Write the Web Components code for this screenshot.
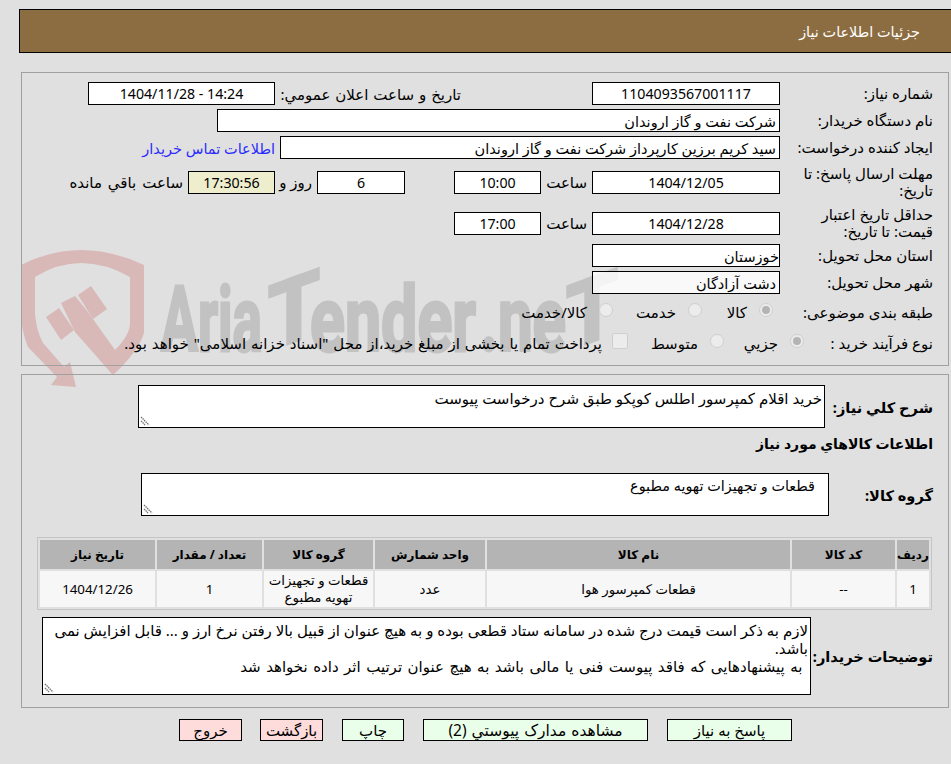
<!DOCTYPE html>
<html lang="fa" dir="rtl">
<head>
<meta charset="utf-8">
<title>جزئیات اطلاعات نیاز</title>
<style>
  html, body { margin:0; padding:0; background:#e0e0e0; }
  body { position:relative; width:951px; height:764px; overflow:hidden; color:#000;
    font:15px "Noto Sans","DejaVu Sans",sans-serif; }
  .t { display:block; flex:none; white-space:nowrap; }
  a { color:#2b2bff; text-decoration:none; font-size:14.5px; }
</style>
</head>
<body>
<water-mark></water-mark>
<app-bar>جزئیات اطلاعات نیاز</app-bar>

<panel-box style="margin-top:19px;height:283px;padding-top:9px">
  <form-row label="شماره نیاز:">
    <val-box center style="width:188px">1104093567001117</val-box>
    <span class="t" style="width:186px;margin-right:131px;word-spacing:1px">تاریخ و ساعت اعلان عمومي:</span>
    <val-box center dir="ltr" style="width:187px">1404/11/28 - 14:24</val-box>
  </form-row>
  <form-row label="نام دستگاه خریدار:" style="margin-top:4px">
    <val-box style="width:563px">شرکت نفت و گاز اروندان</val-box>
  </form-row>
  <form-row label="ایجاد کننده درخواست:" style="margin-top:4px">
    <val-box style="width:500px">سید کریم برزین کارپرداز شرکت نفت و گاز اروندان</val-box>
    <a class="t" href="#" style="margin-right:5px">اطلاعات تماس خریدار</a>
  </form-row>
  <form-row label="مهلت ارسال پاسخ: تا تاریخ:" style="margin-top:6px;height:32px">
    <val-box center style="width:188px">1404/12/05</val-box>
    <span class="t" style="width:46px;margin-right:5px">ساعت</span>
    <val-box center style="width:87px">10:00</val-box>
    <val-box center style="width:88px;margin-right:49px">6</val-box>
    <span class="t" style="width:37px;margin-right:5px">روز و</span>
    <val-box center style="width:87px;background:#eeeecc">17:30:56</val-box>
    <span class="t" style="margin-right:5px;word-spacing:2px">ساعت باقي مانده</span>
  </form-row>
  <form-row label="حداقل تاریخ اعتبار قیمت: تا تاریخ:" style="margin-top:9px;height:32px">
    <val-box center style="width:188px">1404/12/28</val-box>
    <span class="t" style="width:46px;margin-right:5px">ساعت</span>
    <val-box center style="width:87px">17:00</val-box>
  </form-row>
  <form-row label="استان محل تحویل:" style="margin-top:6px">
    <val-box style="width:188px;padding-right:0">خوزستان</val-box>
  </form-row>
  <form-row label="شهر محل تحویل:" style="margin-top:4px">
    <val-box style="width:188px;background:rgba(255,255,255,.8)">دشت آزادگان</val-box>
  </form-row>
  <form-row label="طبقه بندی موضوعی:" style="margin-top:7px;height:22px">
    <radio-opt checked style="width:71px;margin-right:7px">کالا</radio-opt>
    <radio-opt style="width:89px">خدمت</radio-opt>
    <radio-opt>کالا/خدمت</radio-opt>
  </form-row>
  <form-row label="نوع فرآیند خرید :" style="margin-top:9px;height:22px">
    <radio-opt checked style="width:80px;margin-right:-24px">جزيي</radio-opt>
    <radio-opt style="width:96px">متوسط</radio-opt>
    <radio-opt square style="word-spacing:1px">پرداخت تمام یا بخشی از مبلغ خرید،از محل "اسناد خزانه اسلامی" خواهد بود.</radio-opt>
  </form-row>
</panel-box>

<panel-box style="margin-top:8px;height:322px;padding-top:10px">
  <wide-row label="شرح کلي نياز:" style="height:43px;font-size:14.6px">
    <note-area style="width:687px;height:43px;margin-right:108px;padding-right:2px;font-size:15px">خرید اقلام کمپرسور اطلس کوپکو طبق شرح درخواست پیوست</note-area>
  </wide-row>
  <wide-row label="اطلاعات كالاهاي مورد نياز" style="height:20px;margin-top:5px;font-size:14px"></wide-row>
  <wide-row label="گروه کالا:" style="height:43px;margin-top:20px;font-size:14.6px">
    <note-area style="width:688px;height:43px;margin-right:104px;padding-right:13px;font-size:14.4px">قطعات و تجهیزات تهویه مطبوع</note-area>
  </wide-row>
  <items-table style="margin:21px 16px 0 15px"></items-table>
  <wide-row label="توضیحات خریدار:" style="height:78px;margin-top:7px;font-size:14.6px">
    <note-area style="width:769px;height:78px;margin-right:122px;padding-right:2px;font-size:15px">لازم به ذکر است قیمت درج شده در سامانه ستاد قطعی بوده و به هیچ عنوان از قبیل بالا رفتن نرخ ارز و ... قابل افزایش نمی باشد.<br><span style="word-spacing:1.6px">&nbsp;به پیشنهادهایی که فاقد پیوست فنی یا مالی باشد به هیچ عنوان ترتیب اثر داده نخواهد شد</span></note-area>
  </wide-row>
</panel-box>

<action-bar style="margin-top:11px">
  <action-btn style="width:125px;margin-right:159px">پاسخ به نیاز</action-btn>
  <action-btn style="width:225px;margin-right:19px;font-size:15.5px;word-spacing:1px">مشاهده مدارک پیوستي (2)</action-btn>
  <action-btn style="width:62px;margin-right:19px">چاپ</action-btn>
  <action-btn tone="red" style="width:63px;margin-right:19px">بازگشت</action-btn>
  <action-btn tone="red" style="width:63px;margin-right:18px">خروج</action-btn>
</action-bar>

<script>
class AppBar extends HTMLElement {
  constructor() {
    super();
    this.attachShadow({ mode: 'open' }).innerHTML = `
      <style>
        :host { display:flex; align-items:center; box-sizing:border-box; height:44px; width:932px;
          margin-top:9px; border:1px solid #000; border-right:0; background:#8c6d42; color:#fff;
          font-size:14.4px; padding-right:31px; position:relative; }
      </style><slot></slot>`;
  }
}
customElements.define('app-bar', AppBar);

class PanelBox extends HTMLElement {
  constructor() {
    super();
    this.attachShadow({ mode: 'open' }).innerHTML = `
      <style>
        :host { display:block; position:relative; width:926px; margin-right:2px; border:1px solid #a0a0a0; }
      </style><slot></slot>`;
  }
}
customElements.define('panel-box', PanelBox);

class FormRow extends HTMLElement {
  constructor() {
    super();
    this.attachShadow({ mode: 'open' }).innerHTML = `
      <style>
        :host { display:grid; grid-template-columns:153px 1fr; height:23px; padding-right:15px; align-items:center; }
        .lbl { line-height:17px; padding-left:8px; }
        .in { display:flex; align-items:center; }
      </style>
      <div class="lbl"></div><div class="in"><slot></slot></div>`;
  }
  connectedCallback() { this.shadowRoot.querySelector('.lbl').textContent = this.getAttribute('label'); }
}
customElements.define('form-row', FormRow);

class WideRow extends HTMLElement {
  constructor() {
    super();
    this.attachShadow({ mode: 'open' }).innerHTML = `
      <style>
        :host { display:flex; align-items:center; padding-right:15px; }
        .lbl { flex:none; font-weight:700; white-space:nowrap; width:0; }
      </style>
      <div class="lbl"></div><slot></slot>`;
  }
  connectedCallback() { this.shadowRoot.querySelector('.lbl').textContent = this.getAttribute('label'); }
}
customElements.define('wide-row', WideRow);

class ValBox extends HTMLElement {
  constructor() {
    super();
    this.attachShadow({ mode: 'open' }).innerHTML = `
      <style>
        :host { display:flex; flex:none; align-items:center; box-sizing:border-box; height:23px; padding:0 3px;
          border:1px solid #000; background:#fff; white-space:nowrap; overflow:hidden; font-size:14.5px; }
        :host([center]) { justify-content:center; font-size:14.2px; }
      </style><slot></slot>`;
  }
}
customElements.define('val-box', ValBox);

class RadioOpt extends HTMLElement {
  constructor() {
    super();
    this.attachShadow({ mode: 'open' }).innerHTML = `
      <style>
        :host { display:flex; flex:none; align-items:center; gap:12px; white-space:nowrap; }
        i { display:block; flex:none; box-sizing:border-box; width:14px; height:14px; border-radius:50%;
          border:1px solid #cfcfcf; background:#ececec; position:relative; margin-top:-4px; }
        :host([checked]) i::after { content:""; position:absolute; inset:2px; border-radius:50%; background:#b4b4b4; }
        :host([square]) { gap:10px; }
        :host([square]) i { width:16px; height:16px; border-radius:2px; }
      </style><i></i><span><slot></slot></span>`;
  }
}
customElements.define('radio-opt', RadioOpt);

class NoteArea extends HTMLElement {
  constructor() {
    super();
    this.attachShadow({ mode: 'open' }).innerHTML = `
      <style>
        :host { display:block; flex:none; position:relative; box-sizing:border-box; border:1px solid #000;
          background:#fff; line-height:18px; padding-top:3px; overflow:hidden; }
        svg { position:absolute; left:1px; bottom:1px; }
      </style>
      <slot></slot>
      <svg width="10" height="10" viewBox="0 0 10 10">
        <path d="M1 1l8 8M1 5l4 4" stroke="#777" stroke-width="1.4" stroke-dasharray="1.5 .7" fill="none"/>
      </svg>`;
  }
}
customElements.define('note-area', NoteArea);

class ItemsTable extends HTMLElement {
  constructor() {
    super();
    this.attachShadow({ mode: 'open' });
    this._cols = [
      ['ردیف', 32], ['کد کالا', 103], ['نام کالا', 303], ['واحد شمارش', 110],
      ['گروه کالا', 109], ['تعداد / مقدار', 105], ['تاریخ نیاز', 115]
    ];
    this._rows = [['1', '--', 'قطعات کمپرسور هوا', 'عدد', 'قطعات و تجهیزات تهویه مطبوع', '1', '1404/12/26']];
  }
  connectedCallback() { this.render(); }
  render() {
    this.shadowRoot.innerHTML = `
      <style>
        :host { display:block; }
        table { border-collapse:separate; border-spacing:2px; width:895px; table-layout:fixed;
          border:1px solid #c4c4c4; font-size:13.3px; }
        th { background:#b4b4b4; height:29px; padding:0; font-weight:700; font-size:12px; }
        td { background:#f7f7f7; height:36px; padding:0; text-align:center; line-height:17px; }
      </style>
      <table>
        <colgroup>${this._cols.map((c) => `<col style="width:${c[1]}px">`).join('')}</colgroup>
        <tr>${this._cols.map((c) => `<th>${c[0]}</th>`).join('')}</tr>
        ${this._rows.map((r) => `<tr>${r.map((v) => `<td>${v}</td>`).join('')}</tr>`).join('')}
      </table>`;
  }
}
customElements.define('items-table', ItemsTable);

class ActionBar extends HTMLElement {
  constructor() {
    super();
    this.attachShadow({ mode: 'open' }).innerHTML = `
      <style>:host { display:flex; align-items:center; position:relative; }</style><slot></slot>`;
  }
}
customElements.define('action-bar', ActionBar);

class ActionBtn extends HTMLElement {
  constructor() {
    super();
    this.attachShadow({ mode: 'open' }).innerHTML = `
      <style>
        :host { display:flex; flex:none; align-items:center; justify-content:center; box-sizing:border-box; height:22px;
          border:1px solid #000; background:#eaffea; white-space:nowrap; }
        :host([tone=red]) { background:#ffdcdc; }
      </style><slot></slot>`;
  }
}
customElements.define('action-btn', ActionBtn);

class WaterMark extends HTMLElement {
  constructor() {
    super();
    this.attachShadow({ mode: 'open' }).innerHTML = `
      <style>
        :host { display:block; position:absolute; left:0; top:0; width:951px; height:764px; pointer-events:none; }
        svg { display:block; }
        text { font:700 90px Roboto,sans-serif; fill:#c2c2c2; stroke:#c2c2c2; stroke-width:3; direction:ltr; }
      </style>
      <svg width="951" height="764" viewBox="0 0 951 764">
        <g fill="#d9b8b8">
          <path d="M21 265Q80 235 144 265L144 333Q138 352 113 375L100 360L115 350Q130 335 130 323L130 277Q80 249 35 277L35 313Q36 330 43 343L64 367L70 362L76 387L51 385L57 377L28 347Q21 330 21 313Z"/>
          <path d="M46 317L59 308L74 330L61 340Z"/>
          <path d="M61 303L75 296L88 312L115 350L113 375L75 332Z"/>
          <path d="M78 295L91 286L107 309L93 319Z"/>
        </g>
        <text x="161" y="351" textLength="101" lengthAdjust="spacingAndGlyphs">Aria</text>
        <text x="268" y="351" textLength="52" lengthAdjust="spacingAndGlyphs" transform="translate(268 351) skewY(-20) translate(-268 -351)">T</text>
        <text x="310" y="351" textLength="166" lengthAdjust="spacingAndGlyphs">ender</text>
        <text x="480" y="351" textLength="86" lengthAdjust="spacingAndGlyphs">.ne</text>
        <text x="566" y="351" textLength="52" lengthAdjust="spacingAndGlyphs" transform="translate(566 351) skewY(-20) translate(-566 -351)">T</text>
      </svg>`;
  }
}
customElements.define('water-mark', WaterMark);
</script>
</body>
</html>
